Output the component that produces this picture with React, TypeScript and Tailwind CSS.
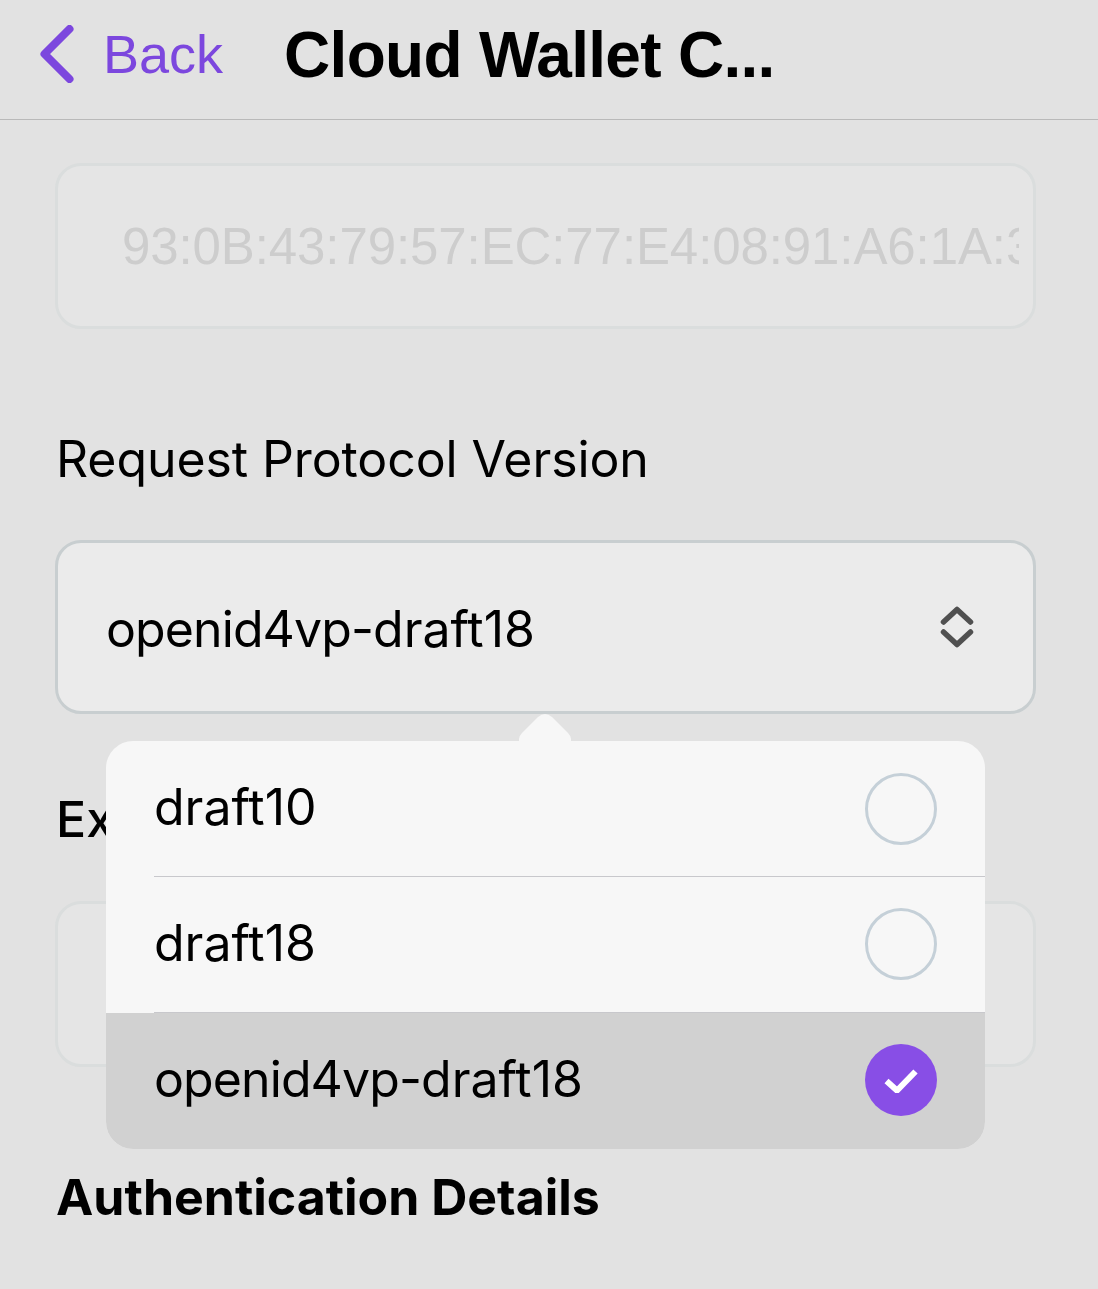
const INTER = "font-['Inter',sans-serif]";

function Radio({ checked, nudge }: { checked?: boolean; nudge?: boolean }) {
  const offset = nudge ? "mb-[2px]" : "";
  if (checked) {
    return (
      <div className={`flex h-[72px] w-[72px] items-center justify-center rounded-full bg-[#884ee6] ${offset}`}>
        <svg width="34" height="26" viewBox="0 0 34 26" fill="none">
          <path d="M2.5 14 L13 23.5 L31.5 4.5" stroke="#fff" strokeWidth="6" />
        </svg>
      </div>
    );
  }
  return <div className={`h-[72px] w-[72px] rounded-full border-[3px] border-[#c5d0d8] ${offset}`} />;
}

function DraftLabel() {
  return (
    <>
      <span className="tracking-[-0.9px]">openid4vp-</span>draft18
    </>
  );
}

function Option({ label, checked, divider, nudge }: { label: React.ReactNode; checked?: boolean; divider?: boolean; nudge?: boolean }) {
  return (
    <div className={`h-[136px] pl-[48px] ${checked ? "bg-[#d1d1d1]" : ""}`}>
      <div className={`flex h-full items-center justify-between pr-[48px] ${divider ? "border-b border-[#c8c8cc]" : ""}`}>
        <span className="mb-[4px] text-[50px] leading-[60px] text-black">{label}</span>
        <Radio checked={checked} nudge={nudge} />
      </div>
    </div>
  );
}

export default function App() {
  return (
    <div className={`relative h-[1289px] w-[1098px] overflow-hidden bg-[#e2e2e2] ${INTER}`}>
      <header className="flex h-[120px] items-center border-b border-[#b9b9b9] pl-[40px]">
        <svg width="34" height="58" viewBox="0 0 34 58" fill="none" className="mb-[12px]">
          <path d="M29.5 4 L4.5 29 L29.5 54" stroke="#7c47de" strokeWidth="8" strokeLinecap="round" strokeLinejoin="round" />
        </svg>
        <span className="mb-[12px] ml-[29px] font-['Liberation_Sans',sans-serif] text-[54px] leading-[60px] text-[#7c47de]">Back</span>
        <h1 className="mb-[10px] ml-[61px] font-['Liberation_Sans',sans-serif] text-[64px] leading-[70px] font-bold tracking-[-0.7px] text-black">Cloud Wallet C...</h1>
      </header>

      <main className="flex flex-col pt-[43px] pl-[55px]">
        <div className="flex h-[166px] w-[981px] items-center overflow-hidden rounded-[26px] border-[3px] border-[#dadddd] bg-[#e5e5e5] pr-[14px] pl-[64px]">
          <span className="mt-[2px] block w-full overflow-hidden font-['Liberation_Sans',sans-serif] text-[51px] leading-[60px] tracking-[-0.1px] whitespace-nowrap text-[#cdcdcd]">
            93:0B:43:79:57:EC:77:E4:08:91:A6:1A:3C:9F
          </span>
        </div>

        <p className="mt-[100px] ml-[1px] text-[50px] leading-[60px] tracking-[-0.1px] text-black">Request Protocol Version</p>

        <div className="mt-[51px] flex h-[174px] w-[981px] items-center justify-between rounded-[26px] border-[3px] border-[#c8ced0] bg-[#ebebeb] pr-[59px] pl-[48px]">
          <span className="mt-[4px] text-[50px] leading-[60px] text-black"><DraftLabel /></span>
          <svg width="34" height="42" viewBox="0 0 34 42" fill="none">
            <path d="M3.5 16 L17 3.5 L30.5 16 M3.5 26 L17 38.5 L30.5 26" stroke="#505050" strokeWidth="5.5" strokeLinecap="round" strokeLinejoin="round" />
          </svg>
        </div>

        <p className="mt-[75px] ml-[1px] text-[50px] leading-[60px] font-medium text-black">Expiry</p>

        <div className="mt-[52px] h-[166px] w-[981px] rounded-[26px] border-[3px] border-[#dadddd] bg-[#e5e5e5]" />

        <p className="mt-[100px] ml-[1px] text-[50px] leading-[60px] font-bold text-black">Authentication Details</p>
      </main>

      <div className="absolute top-[714px] left-[106px] w-[879px]">
        <svg width="52" height="28" viewBox="0 0 52 28" className="absolute top-0 left-[413px]">
          <path d="M0 28 L0 25 Q0 22 3 19 L19 3 Q26 -3 33 3 L49 19 Q52 22 52 25 L52 28 Z" fill="#f7f7f7" />
        </svg>
        <div className="mt-[27px] overflow-hidden rounded-[27px] bg-[#f7f7f7]">
          <Option label="draft10" divider />
          <Option label="draft18" divider nudge />
          <Option label={<DraftLabel />} checked nudge />
        </div>
      </div>
    </div>
  );
}
